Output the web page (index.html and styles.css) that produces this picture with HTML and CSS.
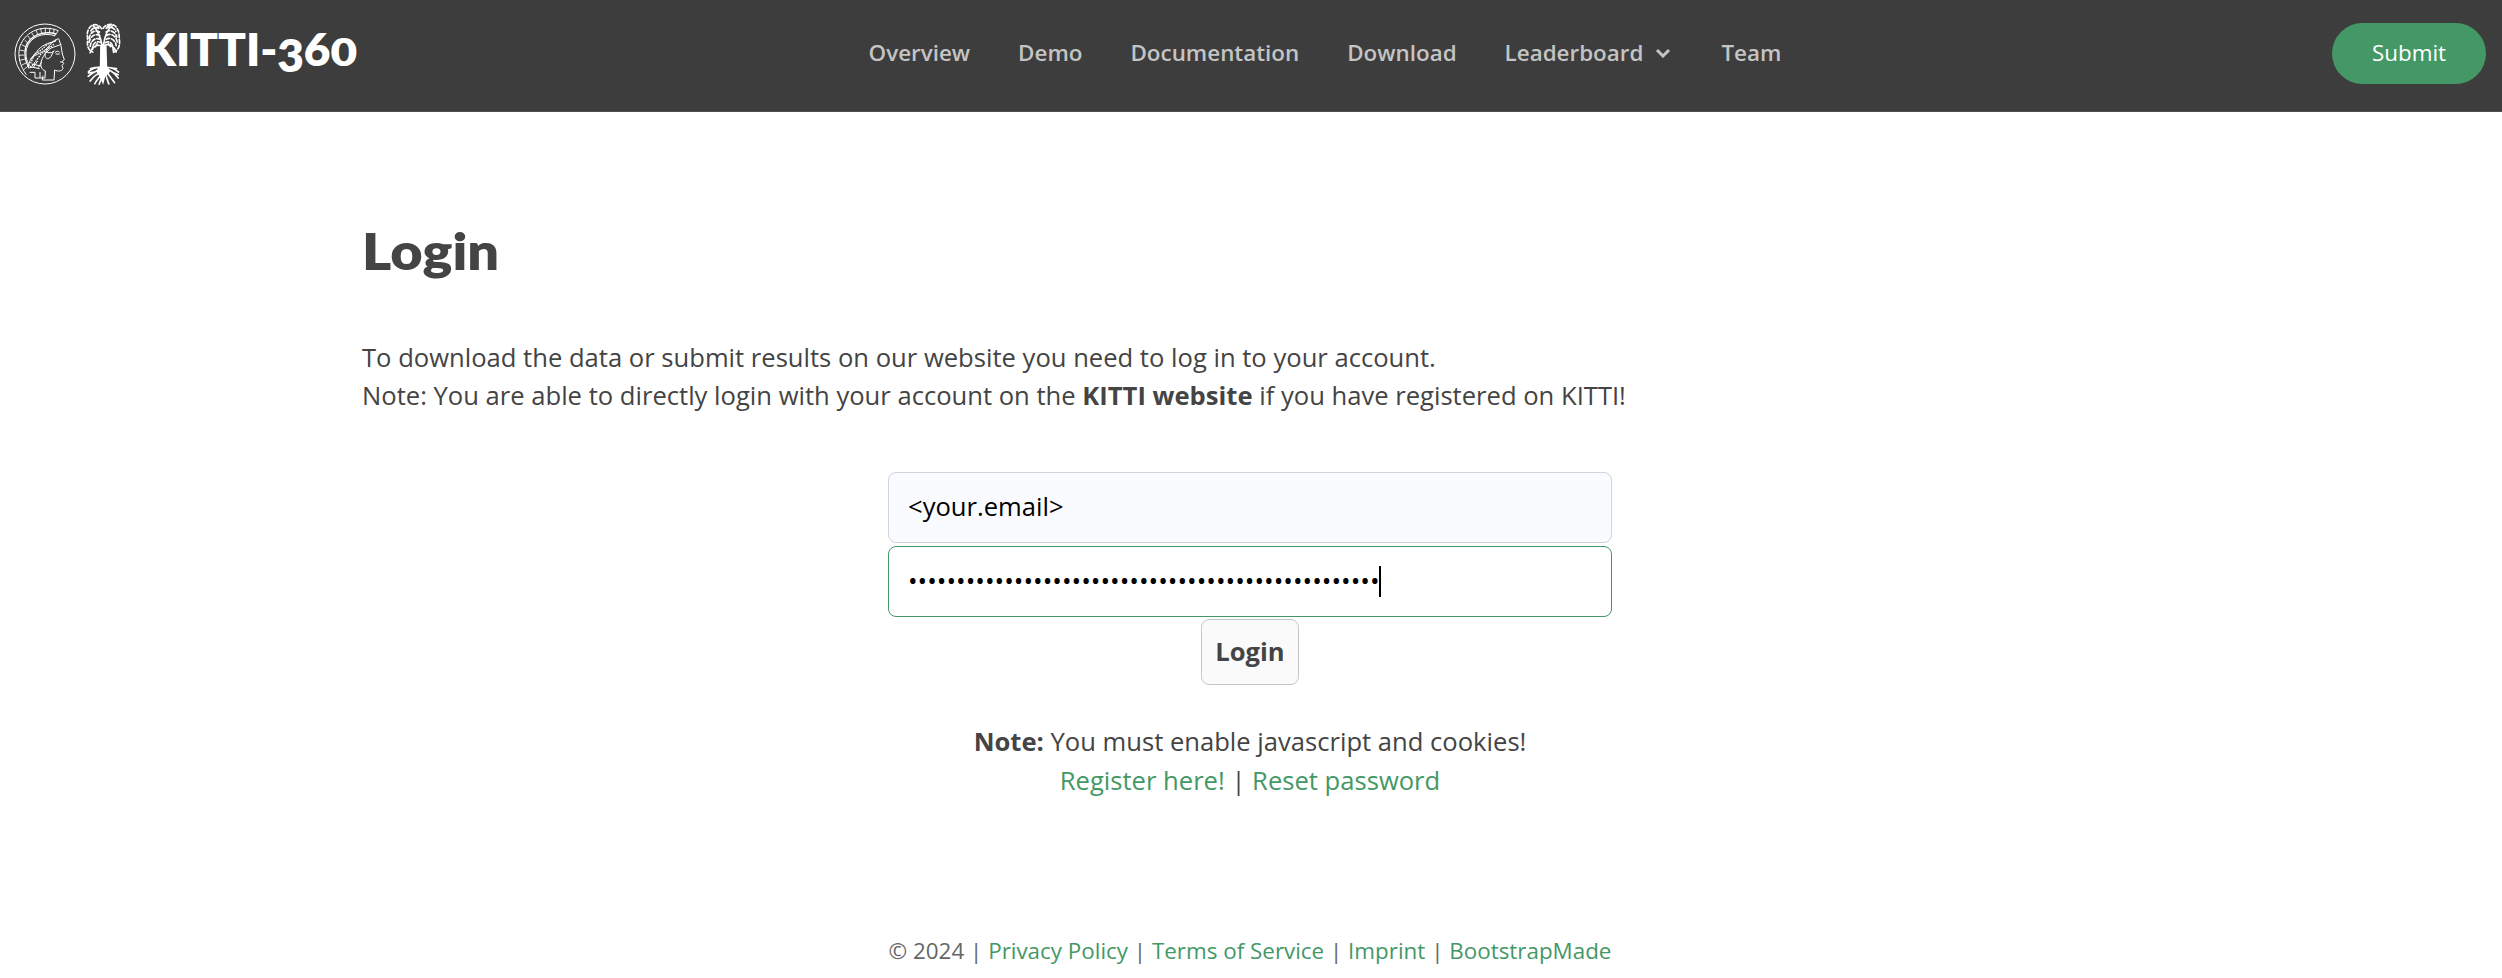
FILE: index.html
```html
<!DOCTYPE html>
<html lang="en">
<head>
<meta charset="utf-8">
<title>KITTI-360 Login</title>
<link rel="stylesheet" href="styles.css">
</head>
<body>
<header class="header">
  <a class="brand">
    <svg class="emblem" viewBox="25 37 186 186" fill="none" stroke="#fff" stroke-width="3">
      <circle cx="118" cy="130" r="90"/>
      <path d="M158 60C112 42 62 58 43 106C34 136 44 168 62 192M148 75C111 64 74 78 63 113C57 137 65 157 76 170"/>
      <path stroke-width="4" d="M152 70C112 59 74 73 60 109C54 133 60 155 71 173"/>
      <path stroke-width="2.5" d="M146 54L143 70M133 51L131 67M119 51L119 67M105 53L108 69M91 58L97 73M78 66L86 80M67 76L76 89M57 88L68 99M48 102L61 109M42 118L57 121M40 134L56 133M42 149L59 145M47 164L63 156M54 177L69 165M158 60L146 77"/>
      <path d="M158 84C150 86 138 96 129 107C120 120 105 126 87 135C72 143 72 155 67 168M150 92C128 96 104 106 94 122L74 146M159 84L166 105L170 130L176 147L170 152L174 159L169 164L172 174C168 182 157 183 147 178L145 208"/>
      <path d="M167 101L136 112C124 124 113 132 107 151C103 164 107 177 119 181L118 202L88 202L88 185L72 185M145 208L110 208L112 195M132 107L118 128C116 142 127 151 136 137L145 120C139 128 127 128 121 122M148 126C152 120 158 121 162 125M150 130L162 130M163 154L172 154M108 154L98 171M96 151L82 171M103 184L103 202M73 168L102 174M78 160L106 166"/>
      <path stroke-width="4" stroke-dasharray="5 3" d="M152 88L125 101L108 117L86 132L75 158M145 101L126 115L106 130L91 151L74 172"/>
    </svg>
    <svg class="tree" viewBox="243 37 104 186" fill="none" stroke="#fff" stroke-width="5" stroke-linecap="round">
      <path fill="#fff" stroke="none" d="M285 104L304 102L306 166L315 183L300 198L294 222L281 194L272 181L284 166Z"/>
      <path d="M292 108C286 80 277 57 264 45M295 104C298 76 309 53 323 44M292 106C270 98 260 113 255 126M296 105C316 96 328 110 333 124"/>
      <path stroke-width="5" stroke-dasharray="11 6" d="M289 54C280 38 258 38 251 55C243 68 248 78 247 92C245 110 253 121 263 124M281 53C272 47 259 52 256 64M283 64C269 55 254 67 252 82M284 75C270 66 254 78 252 96M286 86C271 79 257 90 255 107M288 96C274 88 261 99 262 116M294 53C303 37 329 37 335 53C344 65 341 77 343 91C345 110 335 121 325 125M303 53C313 47 326 49 332 62M303 64C316 54 332 66 335 79M304 75C317 65 334 77 336 94M303 86C316 78 331 88 333 105M300 96C313 88 325 99 324 120M280 48L270 54M306 48L317 43M276 99L268 113M310 99L319 112"/>
      <path d="M287 171C273 168 260 175 250 183M290 179C273 177 260 189 249 197M287 187C275 189 264 199 255 211M291 187C283 202 273 208 269 219M295 187C290 204 284 213 282 221M300 185C304 203 308 211 311 220M303 181C314 198 320 203 328 216M306 175C322 181 330 190 339 202M304 171C322 168 332 178 340 184M270 171L256 174M268 184L250 187M320 172L334 174M322 185L339 192"/>
    </svg>
    <span class="wordmark">KITTI-<span class="three">3</span>6<span class="zero">0</span></span>
  </a>
  <nav class="nav">
    <a>Overview</a><a>Demo</a><a>Documentation</a><a>Download</a><a>Leaderboard<svg class="chevron" viewBox="0 0 16 10"><path d="M2 2L8 8L14 2" fill="none" stroke="currentColor" stroke-width="3"/></svg></a><a>Team</a>
  </nav>
  <a class="submit">Submit</a>
</header>
<main class="main">
  <h1 class="title">Login</h1>
  <p class="intro">To download the data or submit results on our website you need to log in to your account.<br>Note: You are able to directly login with your account on the <b>KITTI website</b> if you have registered on KITTI!</p>
  <form class="form">
    <div class="field filled">&lt;your.email&gt;</div>
    <div class="field focused"><span>•••••••••••••••••••••••••••••••••••••••••••••••••</span><i class="caret"></i></div>
    <button class="login" type="button">Login</button>
  </form>
  <p class="notes"><b>Note:</b> You must enable javascript and cookies!<br><a>Register here!</a> | <a>Reset password</a></p>
</main>
<footer class="footer">© 2024 | <a>Privacy Policy</a> | <a>Terms of Service</a> | <a>Imprint</a> | <a>BootstrapMade</a></footer>
</body>
</html>
```
FILE: styles.css
```css
* { box-sizing: border-box; }
body {
  margin: 0;
  height: 978px;
  overflow: hidden;
  background: #fff;
  color: #444;
  font: 25.6px/38.4px "Open Sans", sans-serif;
}
.header {
  display: grid;
  grid-template-columns: 868.6px 1fr auto;
  align-items: start;
  height: 112px;
  padding: 23px 16px 0 0;
  background: #3d3d3d;
  border-bottom: 1px solid #505050;
}
.brand { display: flex; padding-left: 13.5px; }
.emblem { width: 62px; height: 62px; }
.tree { width: 35px; height: 62px; margin-left: 10px; }
.wordmark {
  margin-left: 23px;
  color: #fff;
  font: 800 46px/52px Lato, sans-serif;
  letter-spacing: -0.1px;
}
.three { display: inline-block; transform: translateY(6px); }
.zero { display: inline-block; transform: scaleY(.84); transform-origin: 50% 79%; }
.nav {
  display: flex;
  gap: 48px;
  color: #c4c4c4;
  font-size: 22.4px;
  font-weight: 600;
  line-height: 60px;
}
.chevron { width: 16px; height: 10px; margin: 0 2px 0 12px; vertical-align: 3px; }
.submit {
  width: 154px;
  height: 61px;
  border-radius: 31px;
  background: #449866;
  color: #fff;
  font-size: 22.4px;
  line-height: 60px;
  text-align: center;
}
.main { width: 1776px; margin: 0 0 0 362px; padding-top: 108px; }
.title {
  margin: 0;
  font: 800 51.2px/61px Lato, sans-serif;
  transform: scaleX(1.09);
  transform-origin: 0 50%;
}
.intro { margin: 58px 0 0; }
.form { display: flex; flex-direction: column; align-items: center; margin-top: 56px; }
.field {
  display: flex;
  align-items: center;
  width: 724px;
  height: 71px;
  padding: 0 19px;
  border: 1px solid #ced4da;
  border-radius: 8px;
  color: #000;
}
.filled { background: #fafbff; }
.focused { margin-top: 3px; border-color: #449866; }
.caret { width: 2px; height: 31px; margin-left: -1px; background: #000; }
.login {
  width: 98px;
  height: 66px;
  margin-top: 2px;
  padding: 0;
  border: 1px solid #c4c8cc;
  border-radius: 8px;
  background: #fafafa;
  color: #444;
  font: 700 25.6px/38px "Open Sans", sans-serif;
}
.notes { margin: 37px 0 0; line-height: 39px; text-align: center; }
.notes a, .footer a { color: #449866; }
.footer {
  margin-top: 133px;
  padding-right: 2px;
  color: #666;
  font-size: 22.4px;
  line-height: 36px;
  text-align: center;
}
```
